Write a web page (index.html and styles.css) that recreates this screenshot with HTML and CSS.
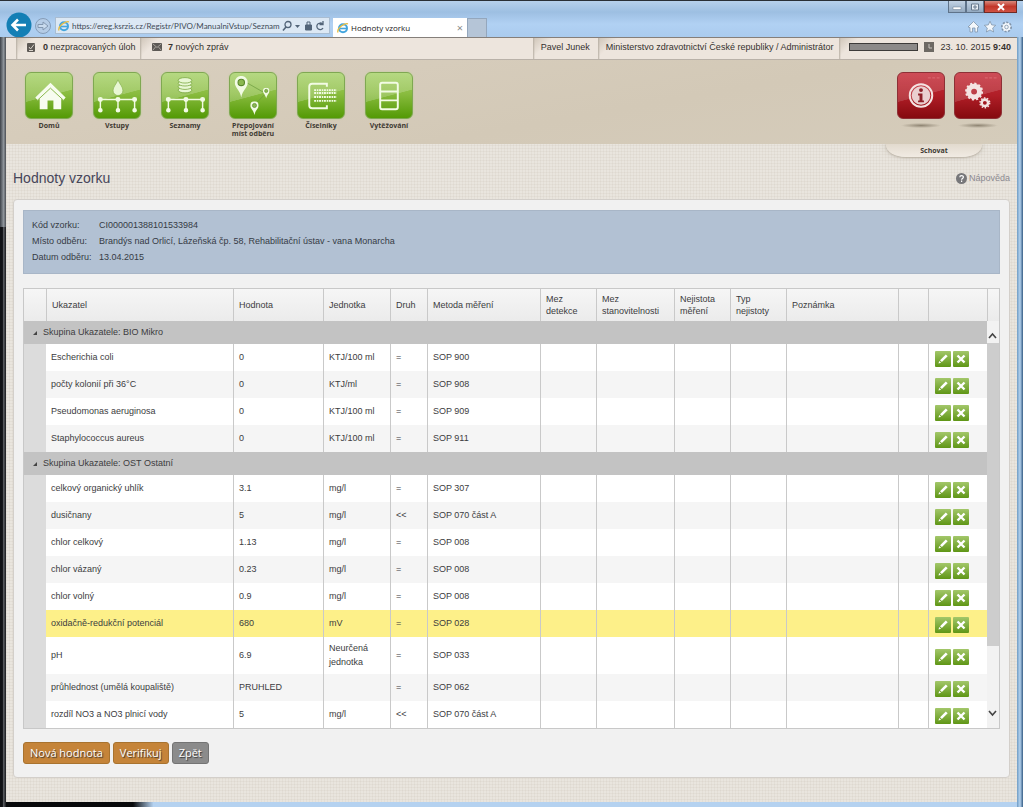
FILE: index.html
```html
<!DOCTYPE html>
<html lang="cs">
<head>
<meta charset="utf-8">
<title>Hodnoty vzorku</title>
<link rel="stylesheet" href="styles.css">
</head>
<body>
<svg class="defs" aria-hidden="true">
  <linearGradient id="btn" x1="0" y1="0" x2="0" y2="1"><stop offset="0" stop-color="#a3c76a"/><stop offset="1" stop-color="#5f9616"/></linearGradient>
  <symbol id="i-edit" viewBox="0 0 16 16"><rect width="16" height="16" rx="1" fill="url(#btn)"/><path d="M3.500 12.500l.7-2.600 1.900 1.900zM5 9.200l5.800-5.800 1.900 1.900-5.800 5.800z" fill="#fff"/></symbol>
  <symbol id="i-del" viewBox="0 0 16 16"><rect width="16" height="16" rx="1" fill="url(#btn)"/><path d="M4.500 4.500l7 7M11.500 4.500l-7 7" stroke="#fff" stroke-width="2.400"/></symbol>
  <symbol id="i-ie" viewBox="0 0 12 12"><circle cx="6" cy="6.300" r="4" fill="none" stroke="#43a5dd" stroke-width="2"/><path d="M3 6.500h6.500" stroke="#43a5dd" stroke-width="1.600"/><path d="M1 10.500C-.5 7 7 .5 11 1.800" fill="none" stroke="#e6bd43" stroke-width="1.300"/></symbol>
  <symbol id="i-net" viewBox="0 0 46 46"><g stroke="#f2fbe4" stroke-width="1.500" fill="#f2fbe4"><path d="M6 27h35M6 27v11M24 27v11M41 27v11" fill="none"/><circle cx="6" cy="27" r="1.800"/><circle cx="24" cy="27" r="1.800"/><circle cx="41" cy="27" r="1.800"/><circle cx="6" cy="38" r="1.600"/><circle cx="24" cy="38" r="1.600"/><circle cx="41" cy="38" r="1.600"/></g></symbol>
  <symbol id="i-pin" viewBox="0 0 12 20"><path d="M6 20C5 13 0 11 0 6a6 6 0 0112 0c0 5-5 7-6 14z" fill="#f2fbe4"/><circle cx="6" cy="6" r="3" fill="#8bb850" stroke="#57872a"/></symbol>
</svg>

<header class="chrome">
  <button class="back" aria-label="Zpět v historii"><svg width="26" height="26" viewBox="0 0 26 26"><circle cx="13" cy="13" r="12.500" fill="#147fb5"/><path d="M20 13H7M12 7.500L6.500 13l5.500 5.500" fill="none" stroke="#fff" stroke-width="2.600"/></svg></button>
  <button class="fwd" aria-label="Vpřed"><svg width="18" height="18" viewBox="0 0 18 18"><circle cx="9" cy="9" r="7.500" fill="#b5cce6" stroke="#869db8"/><path d="M4 7.500h5V5l5 4-5 4v-2.500H4z" fill="#c9dbee" stroke="#8398b1"/></svg></button>
  <div class="address">
    <svg width="12" height="12"><use href="#i-ie"/></svg>
    <input type="text" aria-label="Adresa" value="https://ereg.ksrzis.cz/Registr/PIVO/ManualniVstup/Seznam">
    <svg class="tools" width="44" height="12" viewBox="0 0 44 12" fill="none" stroke="#536579"><circle cx="6" cy="4.500" r="3" stroke-width="1.300"/><path d="M4 7L1 10.500" stroke-width="1.600"/><path d="M13 5h5l-2.500 3z" fill="#536579" stroke="none"/><path d="M23.500 5h6v5h-6z" fill="#536579"/><path d="M25 5V2h3v3"/><path d="M40.500 4A3.300 3.300 0 1041 8M41 1v3.500h-3.500" stroke-width="1.300"/></svg>
  </div>
  <div class="tab"><svg width="12" height="12"><use href="#i-ie"/></svg><span>Hodnoty vzorku</span><button aria-label="Zavřít kartu">×</button></div>
  <button class="newtab" aria-label="Nová karta"></button>
  <div class="wincol">
    <div class="winbtns">
      <button aria-label="Minimalizovat"><svg width="10" height="8"><path d="M1 4h8v2.500H1z" fill="#fff" stroke="#66788d" stroke-width=".5"/></svg></button>
      <button aria-label="Maximalizovat"><svg width="10" height="8"><path d="M1.500 1h7v6h-7zM4 3h2v2H4z" fill="#e9eff6" stroke="#66788d"/></svg></button>
      <button class="close" aria-label="Zavřít"><svg width="10" height="8"><path d="M2 1l6 6M8 1L2 7" stroke="#fff" stroke-width="2"/></svg></button>
    </div>
    <svg class="favs" width="46" height="14" viewBox="0 0 46 14" fill="#f3f7fb" stroke="#8295ab" stroke-width=".8"><path d="M1 7l5.500-5.500L12 7l-1.500.5V12H8V8H5.500v4H3V7.500z"/><path d="M23 1.200l1.700 3.700 4 .4-3 2.700.9 4-3.600-2.100-3.600 2.100.9-4-3-2.700 4-.4z"/><circle cx="39.500" cy="7" r="4.500" stroke-dasharray="2 1.400" stroke-width="2"/><circle cx="39.500" cy="7" r="3.800" stroke="none"/><circle cx="39.500" cy="7" r="1.800"/></svg>
  </div>
</header>

<div class="page">
  <div class="status">
    <div class="cell tasks"><svg width="10" height="10" viewBox="0 0 10 10"><rect x="1" y="1" width="8" height="9" rx="1" fill="#5d5955"/><path d="M3 5l1.500 2L8 2.500M3 8.500h4" stroke="#d9d3cc" fill="none"/></svg><span><b>0</b> nezpracovaných úloh</span></div>
    <div class="cell msgs"><svg width="10" height="10" viewBox="0 0 10 10"><rect y="1" width="10" height="8" rx="1" fill="#5d5955"/><path d="M1 2l4 3.500L9 2M1 8l2.500-3M9 8L6.500 5" stroke="#c9c3bb" fill="none" stroke-width=".7"/></svg><span><b>7</b> nových zpráv</span></div>
    <div class="cell user">Pavel Junek</div>
    <div class="cell org">Ministerstvo zdravotnictví České republiky / Administrátor</div>
    <div class="cell clock"><div class="meter"></div><svg width="10" height="10" viewBox="0 0 10 10"><rect width="10" height="10" fill="#6d6964"/><path d="M5 2v4h3" stroke="#cbc6c0" fill="none"/></svg><span>23. 10. 2015 <b>9:40</b></span></div>
  </div>

  <nav class="menu">
    <a href="#"><svg class="tile green" viewBox="0 0 46 46"><path d="M9 25L24.500 10 40 25l-2.500 3-2-1.800V37h-8v-9h-6v9h-8V26.200l-2 1.800z" fill="#f7fcef"/><path d="M10.500 28.500l14-13 14 13" fill="none" stroke="#88b74a" stroke-width="1"/></svg>Domů</a>
    <a href="#"><svg class="tile green" viewBox="0 0 46 46"><use href="#i-net" width="46" height="46"/><path d="M24 7c2 5 5 7 5 11a5 5 0 01-10 0c0-4 3-6 5-11z" fill="#e8f7d3" stroke="#7dab45" stroke-width=".6"/></svg>Vstupy</a>
    <a href="#"><svg class="tile green" viewBox="0 0 46 46"><use href="#i-net" width="46" height="46"/><g fill="#e8f7d3" stroke="#78a640" stroke-width=".8"><ellipse cx="23" cy="17.500" rx="7" ry="2.800"/><ellipse cx="23" cy="14" rx="7" ry="2.800"/><ellipse cx="23" cy="10.500" rx="7" ry="2.800"/><ellipse cx="23" cy="7.500" rx="7" ry="2.800"/></g></svg>Seznamy</a>
    <a href="#"><svg class="tile green" viewBox="0 0 46 46"><path d="M15 9l21 12-11 11" fill="none" stroke="#6a9a3c" stroke-width=".7"/><use href="#i-pin" x="4" y="3" width="14" height="22"/><use href="#i-pin" x="33" y="15" width="7" height="11"/><use href="#i-pin" x="20" y="29" width="9" height="14"/></svg>Přepojování míst odběru</a>
    <a href="#"><svg class="tile green" viewBox="0 0 46 46"><path d="M29 14v-3H14q-3 0-3 3v19q0 3 3 3h15v-3" fill="none" stroke="#f2fbe4" stroke-width="2"/><path d="M16 17.500h23M16 20.500h23M16 24.500h23M16 28.500h23" stroke="#f2fbe4" stroke-width="2" stroke-dasharray="2 .8 1.500 .7"/></svg>Číselníky</a>
    <a href="#"><svg class="tile green" viewBox="0 0 46 46"><rect x="14" y="10" width="18" height="27" rx="2" fill="none" stroke="#f2fbe4" stroke-width="2"/><path d="M14 19h18M14 28h18" stroke="#f2fbe4" stroke-width="2"/></svg>Vytěžování</a>
    <div class="admin">
      <a href="#" aria-label="Informace"><svg class="tile red" viewBox="0 0 46 46"><circle cx="23" cy="23" r="11.500" fill="none" stroke="#f4e3e2" stroke-width="2"/><circle cx="23" cy="23" r="9.500" fill="#ead0d0"/><circle cx="23" cy="17.500" r="2" fill="#8e2028"/><path d="M20 21h4.500v7H26v2h-6v-2h1.500v-5H20z" fill="#8e2028"/><path d="M30 5h12" stroke="#db6c74" stroke-dasharray="3 1.500"/></svg></a>
      <a href="#" aria-label="Nastavení"><svg class="tile red" viewBox="0 0 46 46"><g fill="none" stroke="#f4e3e2"><circle cx="19" cy="19" r="5.500" stroke-width="5"/><circle cx="19" cy="19" r="8.200" stroke-width="2" stroke-dasharray="2.200 2.090"/><circle cx="30" cy="30.500" r="3.300" stroke-width="2.600"/><circle cx="30" cy="30.500" r="5" stroke-width="1.400" stroke-dasharray="1.600 1.540"/></g><path d="M30 5h12" stroke="#db6c74" stroke-dasharray="3 1.500"/></svg></a>
      <button class="hide">Schovat</button>
    </div>
  </nav>

  <main>
    <div class="head">
      <h1>Hodnoty vzorku</h1>
      <a href="#"><svg width="11" height="11" viewBox="0 0 11 11"><circle cx="5.500" cy="5.500" r="5.500" fill="#77777a"/><path d="M3.800 4.300c0-2.400 3.600-2.200 3.600-.2 0 1.300-1.800 1.300-1.800 2.600M5.600 7.600v1.400" stroke="#fff" stroke-width="1.200" fill="none"/></svg>Nápověda</a>
    </div>
    <section class="panel">
      <dl class="info">
        <dt>Kód vzorku:</dt><dd>CI000001388101533984</dd>
        <dt>Místo odběru:</dt><dd>Brandýs nad Orlicí, Lázeňská čp. 58, Rehabilitační ústav - vana Monarcha</dd>
        <dt>Datum odběru:</dt><dd>13.04.2015</dd>
      </dl>
      <div class="grid">
        <table>
          <colgroup><col class="c-exp"><col class="c-name"><col class="c-val"><col class="c-unit"><col class="c-kind"><col class="c-meth"><col class="c-s"><col class="c-lim"><col class="c-s"><col class="c-s"><col><col class="c-gap"><col class="c-act"></colgroup>
          <thead><tr><th></th><th>Ukazatel</th><th>Hodnota</th><th>Jednotka</th><th>Druh</th><th>Metoda měření</th><th>Mez detekce</th><th>Mez stanovitelnosti</th><th>Nejistota měření</th><th>Typ nejistoty</th><th>Poznámka</th><th></th><th></th></tr></thead>
          <tbody id="rows"></tbody>
        </table>
        <div class="side"><div class="side-head"></div>
          <div class="scroll"><svg width="11" height="22" viewBox="0 0 11 22"><path d="M2 17l3.500-4L9 17" fill="none" stroke="#444" stroke-width="1.600"/></svg><div class="thumb"></div><svg width="11" height="28" viewBox="0 0 11 28"><path d="M2 11l3.500 4L9 11" fill="none" stroke="#444" stroke-width="1.600"/></svg></div>
        </div>
      </div>
      <div class="actions"><button>Nová hodnota</button><button>Verifikuj</button><button class="grey">Zpět</button></div>
    </section>
  </main>
</div>
<script src="rows.js"></script>
</body>
</html>
```
FILE: rows.js
```js
const groups = [
  ["BIO Mikro", [
    ["Escherichia coli", "0", "KTJ/100 ml", "=", "SOP 900"],
    ["počty kolonií při 36°C", "0", "KTJ/ml", "=", "SOP 908"],
    ["Pseudomonas aeruginosa", "0", "KTJ/100 ml", "=", "SOP 909"],
    ["Staphylococcus aureus", "0", "KTJ/100 ml", "=", "SOP 911"]
  ]],
  ["OST Ostatní", [
    ["celkový organický uhlík", "3.1", "mg/l", "=", "SOP 307"],
    ["dusičnany", "5", "mg/l", "<<", "SOP 070 část A"],
    ["chlor celkový", "1.13", "mg/l", "=", "SOP 008"],
    ["chlor vázaný", "0.23", "mg/l", "=", "SOP 008"],
    ["chlor volný", "0.9", "mg/l", "=", "SOP 008"],
    ["oxidačně-redukční potenciál", "680", "mV", "=", "SOP 028"],
    ["pH", "6.9", "Neurčená jednotka", "=", "SOP 033"],
    ["průhlednost (umělá koupaliště)", "PRUHLED", "", "=", "SOP 062"],
    ["rozdíl NO3 a NO3 plnicí vody", "5", "mg/l", "<<", "SOP 070 část A"]
  ]]
];
const body = document.getElementById("rows");
const actions = '<button aria-label="Upravit"><svg width="16" height="16"><use href="#i-edit"/></svg></button>' +
  '<button aria-label="Smazat"><svg width="16" height="16"><use href="#i-del"/></svg></button>';
for (const [name, rows] of groups) {
  const g = body.insertRow();
  g.className = "group";
  const gc = g.insertCell();
  gc.colSpan = 13;
  gc.innerHTML = '<svg width="4" height="4"><path d="M4 0v4H0z" fill="#444"/></svg>';
  gc.append("Skupina Ukazatele: " + name);
  rows.forEach((values, i) => {
    const tr = body.insertRow();
    tr.className = values[1] === "680" ? "selected" : i % 2 ? "alt" : "";
    tr.insertCell().className = "indent";
    for (const v of values) tr.insertCell().textContent = v;
    for (let n = 0; n < 6; n++) tr.insertCell();
    const last = tr.insertCell();
    last.className = "act";
    last.innerHTML = actions;
  });
}
```
FILE: styles.css
```css
* { box-sizing: border-box; }
html { height: 100%; }
body {
  margin: 0; min-height: 100%; display: flex; flex-direction: column;
  padding: 0 6px 5px; color: #3c3c3e;
  font: 9px/14px "Liberation Sans", Arial, sans-serif;
  background:
    linear-gradient(#2a2f35, #2a2f35) 0 0 / 100% 1px no-repeat,
    linear-gradient(90deg, #3c4148, #8f959b 60%, #4a4d52) 0 37px / 6px 190px no-repeat,
    linear-gradient(90deg, #101114 40%, #5b5d61 60%, #17181b) 0 227px / 6px 100% no-repeat,
    linear-gradient(90deg, #6f9cc4, #b5d3ef 50%, #365d85) 100% 37px / 6px 100% no-repeat,
    linear-gradient(90deg, #08090b 13%, #b5d2f0 15%) 0 100% / 100% 5px no-repeat,
    linear-gradient(#b9d2ec, #9dbfe2 12px, #b1d1f3 24px, #aacbee 37px);
}
button { border: 0; padding: 0; margin: 0; background: none; font: inherit; color: inherit; cursor: pointer; }
a { color: inherit; text-decoration: none; }
svg { display: block; flex: none; }
.defs { position: absolute; width: 0; height: 0; }

.chrome { height: 37px; display: flex; align-items: flex-end; font-family: "Open Sans", sans-serif; font-size: 8px; }
.back { margin-bottom: -1px; }
.fwd { margin: 0 3px 2px 2px; }
.address { display: flex; align-items: center; gap: 2px; width: 275px; height: 17px; margin-bottom: 3px; padding: 0 3px 0 2px; background: #dce8f4; border: 1px solid #a9bdd2; }
.address input { flex: 1; min-width: 0; border: 0; padding: 0; background: none; font: 8px/14px Lato, sans-serif; color: #414b56; }
.tab { display: flex; align-items: center; gap: 2px; width: 134px; height: 19px; margin-left: 3px; padding: 0 4px; background: #fff; color: #222; }
.tab button { margin-left: auto; font-size: 11px; color: #8a8a8a; }
.newtab { width: 20px; height: 19px; background: #b5c5d7; border: 1px solid #94a7bd; border-bottom: 0; }
.wincol { margin-left: auto; height: 100%; display: flex; flex-direction: column; align-items: flex-end; gap: 7px; padding-top: 1px; }
.winbtns { display: flex; }
.winbtns button { width: 18px; height: 12px; display: flex; align-items: center; justify-content: center; background: linear-gradient(#c3d3e4, #93a9c0); border: 1px solid #5f738a; border-top: 0; }
.winbtns .close { width: 33px; background: linear-gradient(#d9897c, #c2372a 50%, #cf5142); border-color: #702a25; }
.favs { margin-right: 4px; }

.page {
  flex: 1; display: flex; flex-direction: column;
  background:
    repeating-linear-gradient(90deg, rgba(160, 145, 125, .08) 0 1px, transparent 1px 3px),
    repeating-linear-gradient(rgba(160, 145, 125, .08) 0 1px, transparent 1px 3px), #e9e5de;
}
.status { height: 23px; display: flex; background: #ede5dd; border-top: 1px solid #857f7a; border-bottom: 1px solid #b9b1a8; color: #35312e; padding-left: 10px; }
.cell { display: flex; align-items: center; padding-bottom: 3px; background: linear-gradient(90deg, #b8b0a5, transparent 2px), linear-gradient(135deg, #cfc5b8, transparent 14px); }
.tasks { padding-left: 10px; gap: 7px; width: 124px; }
.msgs { padding-left: 12px; gap: 6px; }
.user { margin-left: auto; padding: 0 8px 3px; }
.org { padding: 0 6px 3px 8px; }
.clock { gap: 6px; padding: 0 6px 3px 10px; }
.meter { width: 69px; height: 8px; background: #8c8a89; border: 1px solid #3d3b3a; }

.menu { height: 84px; display: flex; padding: 12px 15px 0 9px; background: linear-gradient(170deg, #d9cfbf, #d3c9b7 60%, #d5ccbb); font: bold 7px/8px "Open Sans", sans-serif; color: #403a33; }
.menu > a { width: 68px; padding: 0 10px; display: flex; flex-direction: column; align-items: center; gap: 3px; text-align: center; }
.tile { width: 48px; height: 47px; border-radius: 6px; }
.green { border: 1px solid #7fa852; background: linear-gradient(165deg, rgba(255, 255, 255, .2) 50%, transparent 51%), linear-gradient(#a3cf62, #8abc40 45%, #539a05); box-shadow: 0 0 2px #b9d08f; }
.red { border: 1px solid #8d3036; background: linear-gradient(165deg, rgba(255, 255, 255, .14) 50%, transparent 51%), linear-gradient(#c62f3b, #b01e27 50%, #850a0f); }
.admin { position: relative; margin-left: auto; display: flex; gap: 9px; }
.admin a::after { content: ""; display: block; height: 5px; margin: 4px 4px 0; background: radial-gradient(closest-side, #8f8573, transparent); }
.hide { position: absolute; top: 72px; right: 20px; width: 96px; height: 13px; line-height: 12px; background: linear-gradient(#e2dace, #f1ebe3); border-radius: 0 0 20px 20px / 0 0 12px 12px; box-shadow: 0 1px 2px #bbb3a6, 0 -2px 8px -2px #9c9486; clip-path: inset(0 -16px -4px); }

main { flex: 1; padding: 24px 7px 24px; display: flex; flex-direction: column; }
.head { display: flex; align-items: center; justify-content: space-between; height: 20px; margin-bottom: 11px; }
h1 { margin: 0; font-size: 14px; line-height: 20px; font-weight: normal; color: #46465a; }
.head a { display: flex; align-items: center; gap: 2px; color: #8b8990; }
.panel { flex: 1; padding: 10px 9px; background: #f1f1f1; border: 1px solid #d3cfca; border-radius: 4px; }
.info { margin: 0 0 14px; padding: 6px 8px 8px; display: grid; grid-template-columns: 67px 1fr; line-height: 16px; background: #b2c1d3; border: 1px solid #a8b6c7; color: #363b45; }
.info dd { margin: 0; }

.grid { display: flex; border: 1px solid #c8c8c8; }
table { flex: 1; width: 0; table-layout: fixed; border-collapse: separate; border-spacing: 0; }
.c-exp { width: 22px; } .c-name { width: 187px; } .c-val { width: 90px; } .c-unit { width: 67px; }
.c-kind { width: 37px; } .c-meth { width: 113px; } .c-s { width: 56px; } .c-lim { width: 78px; }
.c-gap { width: 30px; } .c-act { width: 59px; }
th, td { padding: 0 0 0 5px; text-align: left; font-weight: normal; border-left: 1px solid #c9c9c9; }
th { height: 32px; line-height: 12px; background: linear-gradient(#f6f6f6, #ebebeb); }
th:first-child, td:first-child, td:nth-child(2) { border-left: 0; }
td { height: 27px; padding: 4px 0 5px 5px; background: #fff; }
.alt td { background: #f5f5f5; }
.selected td { background: #fdf089; }
.group td { height: 23px; padding-left: 9px; background: #c3c3c3; }
.group svg { display: inline-block; margin-right: 6px; }
tbody tr .indent { background: #dcdcdc; }
td.act { padding: 3px 0 0 6px; }
.act button { display: inline-block; vertical-align: top; margin-right: 2px; }
.side { width: 12px; display: flex; flex-direction: column; }
.side-head { height: 32px; background: linear-gradient(#f6f6f6, #ebebeb); border-left: 1px solid #c9c9c9; }
.scroll { flex: 1; display: flex; flex-direction: column; background: #f2f2f2; }
.thumb { flex: 1; background: #cdcdcd; margin-bottom: 54px; }
.actions { display: flex; gap: 3px; margin-top: 13px; }
.actions button { height: 22px; padding: 0 6px; border: 1px solid #a8732f; border-radius: 3px; background: #c58439; color: #fff; font: 11px/14px "Open Sans", sans-serif; text-shadow: 1px 1px 1px #333; }
.actions .grey { background: #8b8b8b; border-color: #747474; }
```
